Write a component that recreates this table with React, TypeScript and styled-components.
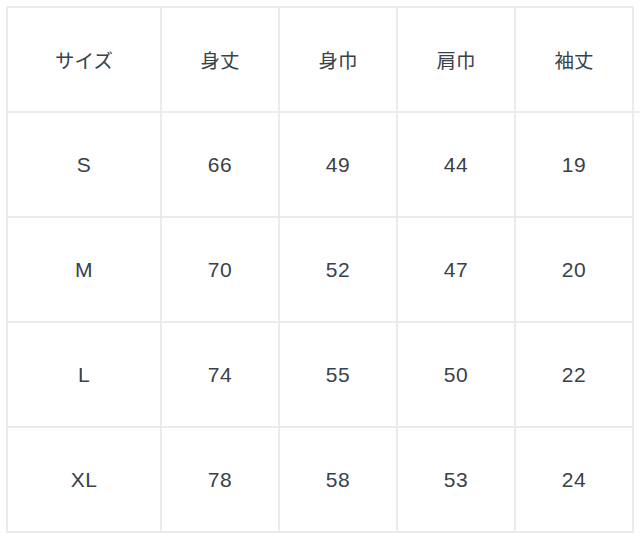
import React from "react";
import styled, { createGlobalStyle } from "styled-components";

const GlobalStyle = createGlobalStyle`
  html, body { margin: 0; padding: 0; background: #ffffff; }
  body { font-family: "Liberation Sans", "Noto Sans CJK JP", sans-serif; }
`;

const Wrapper = styled.div`
  display: flex;
  align-items: flex-start;
  padding: 6px 0 0 6px;
`;

const Table = styled.table`
  border-collapse: separate;
  border-spacing: 0;
  border: 1px solid #ebebeb;
  table-layout: fixed;
  width: 628px;
  color: #38424b;
`;

const Cell = styled.td<{ $head?: boolean; $first?: boolean }>`
  border: 1px solid #ebebeb;
  height: 103px;
  padding: 0;
  text-align: center;
  vertical-align: middle;
  width: ${(p) => (p.$first ? "152px" : "auto")};
  font-size: ${(p) => (p.$head ? "19.5px" : "21px")};
  font-family: "Liberation Sans", "Noto Sans CJK JP", sans-serif;
  letter-spacing: ${(p) => (p.$head ? "0" : "0.5px")};
`;

const Stub = styled.div`
  flex: 1;
  height: 2px;
  margin-top: 105px;
  background: #ebebeb;
`;

const head = ["サイズ", "身丈", "身巾", "肩巾", "袖丈"];
const rows = [
  ["S", "66", "49", "44", "19"],
  ["M", "70", "52", "47", "20"],
  ["L", "74", "55", "50", "22"],
  ["XL", "78", "58", "53", "24"],
];

export default function App() {
  return (
    <>
      <GlobalStyle />
      <Wrapper>
        <Table>
          <tbody>
            <tr>
              {head.map((h, i) => (
                <Cell key={h} $head $first={i === 0}>
                  {h}
                </Cell>
              ))}
            </tr>
            {rows.map((r) => (
              <tr key={r[0]}>
                {r.map((v, i) => (
                  <Cell key={i} $first={i === 0}>
                    {v}
                  </Cell>
                ))}
              </tr>
            ))}
          </tbody>
        </Table>
        <Stub />
      </Wrapper>
    </>
  );
}
